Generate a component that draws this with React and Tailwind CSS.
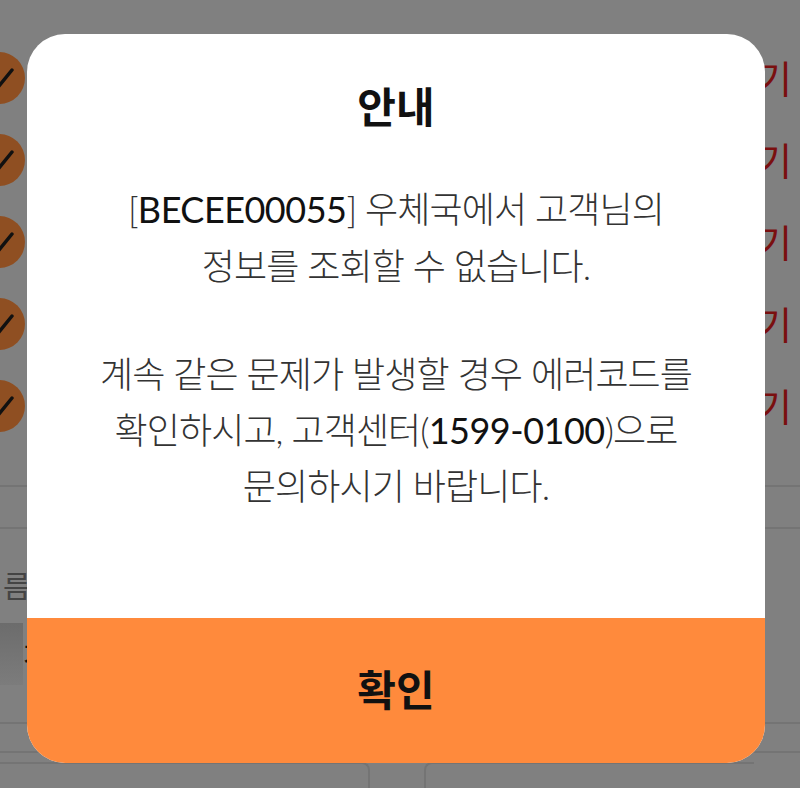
import React from 'react';

const font = "font-['Lato','Noto_Sans_CJK_KR',sans-serif]";

const Row = () => (
  <div className="h-[82px] shrink-0 flex items-center justify-between">
    <div className="w-[52px] h-[52px] -ml-[27px] rounded-full bg-[#8f4f22] flex items-center justify-center">
      <svg width="52" height="52" viewBox="0 0 52 52" className="block">
        <path d="M17 45 L39 18" stroke="#111" strokeWidth="3.5" strokeLinecap="round" fill="none" />
      </svg>
    </div>
    <span className="text-[38px] font-normal leading-none text-[#7a0f0f] pr-[8px]">기</span>
  </div>
);

export default function App() {
  return (
    <div className={`relative w-[800px] h-[788px] overflow-hidden bg-[#808080] ${font}`}>
      {/* page behind the dialog */}
      <div className="flex flex-col pt-[37px]">
        {[0, 1, 2, 3, 4].map((i) => (
          <Row key={i} />
        ))}
        <div className="h-[44px] mt-[38px] border-t-2 border-b-2 border-[#747474]" />
        <div className="pt-[38px] pl-[3px] text-[30px] leading-[36px] text-[#444]">름</div>
        <div className="mt-[20px] h-[62px] flex items-center">
          <div className="h-full w-[23px] bg-gradient-to-b from-[#6c6c6c] to-[#7c7c7c]" />
          <span className="-ml-[4px] text-[34px] leading-none text-[#111]">ㅈ</span>
        </div>
        <div className="mt-[37px] h-[31px] border-t-2 border-b-2 border-[#747474]" />
        <div className="mt-[9px] flex">
          <div className="w-[370px] h-[40px] border-t-2 border-r-2 border-[#747474] rounded-tr-[8px]" />
          <div className="ml-[54px] w-[330px] h-[40px] border-t-2 border-l-2 border-[#747474] rounded-tl-[8px]" />
        </div>
      </div>

      {/* dialog */}
      <div className="absolute inset-0 flex items-start justify-start pt-[34px] pl-[27px]">
        <div className="w-[738px] h-[729px] flex flex-col rounded-[38px] overflow-hidden bg-white">
          <div className="flex-1 flex flex-col items-center pt-[46px] text-center">
            <h2 className="text-[42px] font-bold leading-[54px] text-[#111]">안내</h2>
            <p className="mt-[47px] text-[36px] font-light leading-[57px] text-[#333] tracking-[-0.9px]">
              [<span className="font-normal tracking-[-0.5px] text-[#111]">BECEE00055</span>] 우체국에서 고객님의
              <br />
              정보를 조회할 수 없습니다.
            </p>
            <p className="mt-[51px] text-[36px] font-light leading-[56px] text-[#333] tracking-[-0.9px]">
              계속 같은 문제가 발생할 경우 에러코드를
              <br />
              확인하시고, 고객센터(<span className="font-normal tracking-[-0.5px] text-[#111]">1599-0100</span>)으로
              <br />
              문의하시기 바랍니다.
            </p>
          </div>
          <button className="h-[145px] shrink-0 bg-[#ff8a3c] text-[42px] font-bold text-[#111]">확인</button>
        </div>
      </div>
    </div>
  );
}
